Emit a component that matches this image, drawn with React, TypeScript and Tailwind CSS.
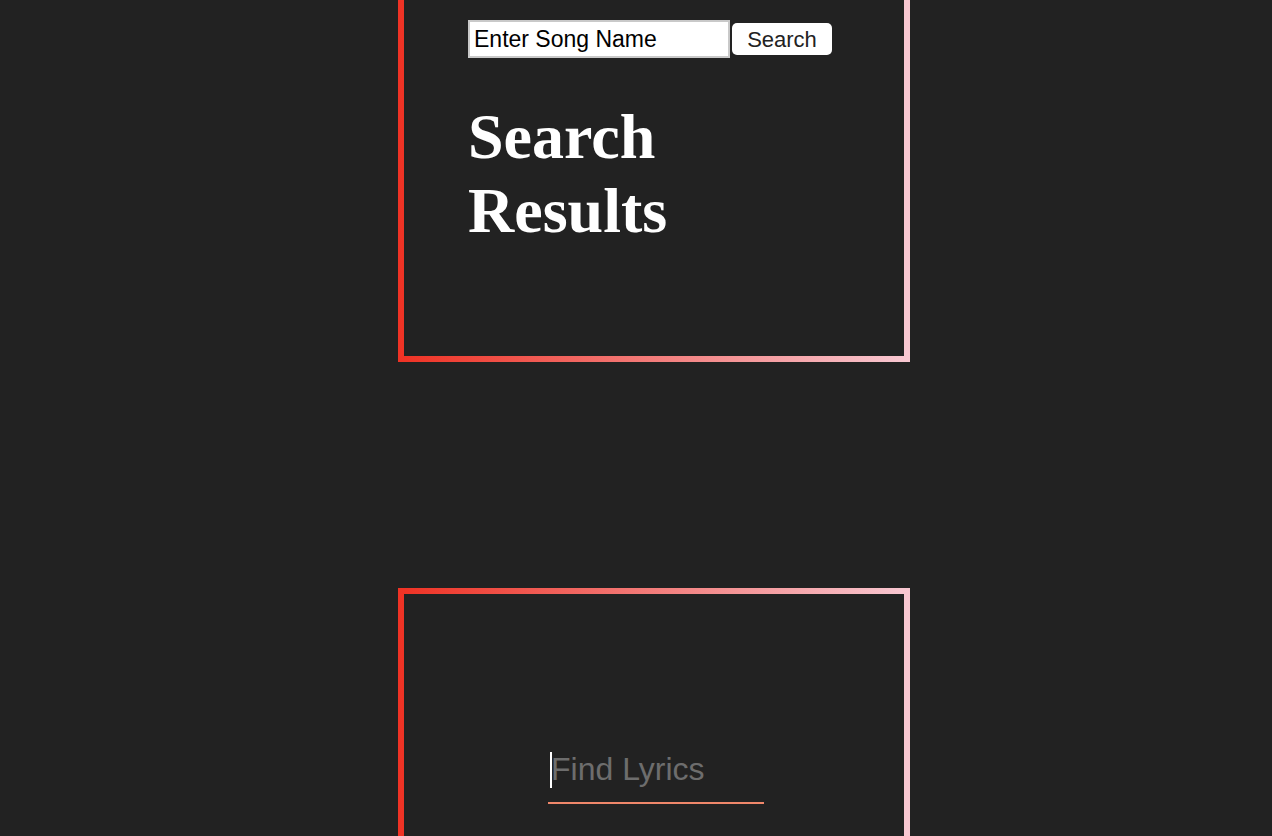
import React from "react";

export default function App() {
  return (
    <div className="h-[836px] w-full overflow-hidden bg-[#222222]">
      <div
        className="ml-[398px] -mt-[6px] w-[512px] border-[6px] [border-image:linear-gradient(to_right,#ef3325,#f8c7d1)_1] pl-[64px] pt-[20px] pb-[108px]"
      >
        <div className="flex items-center gap-[2px]">
          <input
            defaultValue="Enter Song Name"
            className="h-[38px] w-[262px] border-2 border-[#c9c9c9] bg-white px-[4px] text-[23px] text-black outline-none [font-family:'Liberation_Sans',Arial,sans-serif]"
          />
          <button className="h-[32px] w-[100px] rounded-[5px] bg-white pb-[1px] text-[22px] text-[#222] [font-family:'Liberation_Sans',Arial,sans-serif]">
            Search
          </button>
        </div>
        <h1 className="mt-[42px] w-[372px] text-[64px] font-bold leading-[74px] text-white [font-family:'Liberation_Serif','Times_New_Roman',serif]">
          Search Results
        </h1>
      </div>

      <div className="ml-[398px] mt-[226px] h-[400px] w-[512px] border-[6px] [border-image:linear-gradient(to_right,#ef3325,#f8c7d1)_1] pt-[157px]">
        <div className="relative ml-[144px] w-[216px]">
          <input
            placeholder="Find Lyrics"
            className="h-[53px] w-[216px] border-b-2 border-[#f0876a] bg-transparent pb-[14px] pl-[3px] text-[32px] leading-[37px] text-white caret-transparent outline-none placeholder:text-[#6d6d6d] [font-family:'Liberation_Sans',Arial,sans-serif]"
          />
          <div className="pointer-events-none absolute left-[2px] top-[1px] h-[36px] w-[2px] bg-white" />
        </div>
      </div>
    </div>
  );
}
